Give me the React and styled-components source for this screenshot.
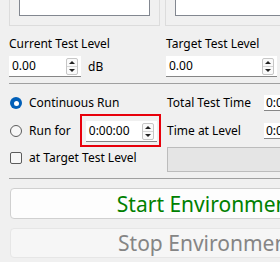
import React from "react"
import styled, { createGlobalStyle } from "styled-components"

const Global = createGlobalStyle`
  html, body { margin: 0; padding: 0; background: #f0f0f0; overflow: hidden; }
  body { font-family: "Noto Sans", "Open Sans", sans-serif; font-size: 12px; color: #000; }
`

const Page = styled.div`
  width: 394px;
  padding-left: 9px;
`

const Panels = styled.div`
  display: grid;
  grid-template-columns: 151px 1fr;
  column-gap: 5px;
`

const Frame = styled.div`
  height: 25px;
  border: 1px solid #dcdcdc;
  border-top: none;
  padding: 0 9px;
`

const ListBox = styled.div`
  height: 15px;
  background: #fff;
  border: 1px solid #828790;
  border-top: none;
`

const Grid = styled.div`
  display: grid;
  grid-template-columns: 156px 1fr;
  align-items: center;
`

const Label = styled.div`
  line-height: 16px;
  white-space: nowrap;
  padding-left: ${(p) => (p.$right ? "1px" : "0")};
  margin-top: ${(p) => p.$top || 0}px;
`

const SpinRow = styled.div`
  display: flex;
  align-items: center;
  gap: 7px;
  margin-top: 4px;
  padding-left: ${(p) => (p.$right ? "1px" : "0")};
`

const SpinField = styled.div`
  display: flex;
  align-items: center;
  flex-shrink: 0;
  width: ${(p) => p.$w}px;
  height: 20px;
  background: #fff;
  border-bottom: 1px solid #868686;
  box-sizing: content-box;
`

const SpinText = styled.span`
  flex: 1;
  padding-left: 3px;
  line-height: 20px;
`

const Arrows = styled.div`
  width: 10px;
  height: 15px;
  margin-right: 3px;
  border: 1px solid #c6c6c6;
  border-radius: 2px;
  display: flex;
  flex-direction: column;
  background: #fafafa;
`

const ArrowHalf = styled.div`
  flex: 1;
  display: flex;
  align-items: center;
  justify-content: center;
  border-top: ${(p) => (p.$down ? "1px solid #d6d6d6" : "none")};
  &::after {
    content: "";
    border-left: 3px solid transparent;
    border-right: 3px solid transparent;
    ${(p) => (p.$down ? "border-top: 3px solid #222;" : "border-bottom: 3px solid #222;")}
  }
`

const Divider = styled.div`
  height: 1px;
  background: #a0a0a0;
  margin-top: ${(p) => p.$top}px;
`

const RunGrid = styled.div`
  display: grid;
  grid-template-columns: 157px 98px 1fr;
  grid-template-rows: 28px 27px 28px;
  align-items: center;
  margin-top: 5px;
`

const Option = styled.label`
  display: flex;
  align-items: center;
  gap: 7px;
  line-height: 16px;
  white-space: nowrap;
  padding-left: 1px;
`

const Radio = styled.span`
  width: 12px;
  height: 12px;
  flex-shrink: 0;
  border-radius: 50%;
  box-sizing: border-box;
  display: inline-flex;
  align-items: center;
  justify-content: center;
  ${(p) =>
    p.$on
      ? "background: #005fb8; &::after { content: ''; width: 5px; height: 5px; border-radius: 50%; background: #fff; }"
      : "border: 1px solid #5c5c5c; background: #f7f7f7;"}
`

const Check = styled.span`
  width: 12px;
  height: 12px;
  flex-shrink: 0;
  box-sizing: border-box;
  border: 1px solid #5c5c5c;
  border-radius: 2px;
  background: #f7f7f7;
`

const Highlight = styled.div`
  margin: -3px 0 -3px 2px;
  flex-shrink: 0;
  border: 2px solid #e8000b;
  padding: 5px 2px 3px 4px;
`

const TimeField = styled.div`
  height: 15px;
  background: #fff;
  border-bottom: 1px solid #868686;
  padding-left: 2px;
  line-height: 15px;
`

const Disabled = styled.div`
  grid-column: 2 / 4;
  align-self: end;
  height: 23px;
  background: #e5e5e5;
  border: 1px solid #bcbcbc;
  margin-left: 1px;
`

const Button = styled.div`
  margin: ${(p) => p.$top}px 0 0 1px;
  height: ${(p) => p.$h}px;
  box-sizing: border-box;
  border: 1px solid ${(p) => (p.$off ? "#e6e6e6" : "#d0d0d0")};
  border-radius: 4px;
  background: ${(p) => (p.$off ? "#f6f6f6" : "#fdfdfd")};
  color: ${(p) => (p.$off ? "#858585" : "#008000")};
  font-size: 21px;
  display: flex;
  align-items: center;
  justify-content: center;
`

const Spin = ({ w, value }) => (
  <SpinField $w={w}>
    <SpinText>{value}</SpinText>
    <Arrows>
      <ArrowHalf />
      <ArrowHalf $down />
    </Arrows>
  </SpinField>
)

export default function App() {
  return (
    <Page>
      <Global />
      <Panels>
        <Frame>
          <ListBox />
        </Frame>
        <Frame>
          <ListBox />
        </Frame>
      </Panels>
      <Grid>
        <Label $top={10}>Current Test Level</Label>
        <Label $top={10} $right>
          Target Test Level
        </Label>
        <SpinRow>
          <Spin w={72} value="0.00" />
          <span>dB</span>
        </SpinRow>
        <SpinRow $right>
          <Spin w={111} value="0.00" />
        </SpinRow>
      </Grid>
      <Divider $top={6} />
      <RunGrid>
        <Option>
          <Radio $on />
          Continuous Run
        </Option>
        <Label $right>Total Test Time</Label>
        <TimeField>0:00:00</TimeField>
        <Option>
          <Radio />
          Run for
          <Highlight>
            <Spin w={71} value="0:00:00" />
          </Highlight>
        </Option>
        <Label $right>Time at Level</Label>
        <TimeField>0:00:00</TimeField>
        <Option>
          <Check />
          at Target Test Level
        </Option>
        <Disabled />
      </RunGrid>
      <Divider $top={6} />
      <Button $top={9} $h={31}>
        Start Environment
      </Button>
      <Button $top={9} $h={30} $off>
        Stop Environment
      </Button>
    </Page>
  )
}
